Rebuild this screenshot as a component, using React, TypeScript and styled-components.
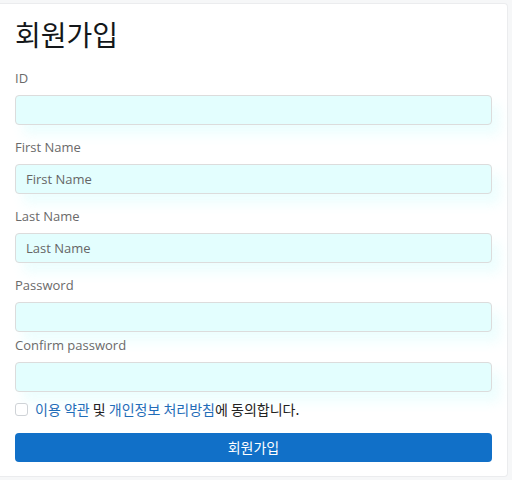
import React from "react";
import styled, { createGlobalStyle } from "styled-components";

const Global = createGlobalStyle`
  html, body { margin: 0; padding: 0; background: #f6f7f8; }
  body { font-family: "Open Sans", "Noto Sans CJK KR", sans-serif; }
  * { box-sizing: border-box; }
`;

const Page = styled.div`
  padding: 3px 4px 3px 0;
  width: 512px;
  height: 480px;
`;

const Card = styled.form`
  background: #fff;
  border: 1px solid #ebecee;
  border-left: none;
  border-radius: 0 4px 4px 0;
  height: 474px;
  padding: 12px 15px 14px 15px;
  display: flex;
  flex-direction: column;
`;

const Title = styled.h1`
  margin: 0 0 17px 0;
  font-family: "Noto Sans CJK KR", sans-serif;
  font-weight: 400;
  font-size: 28px;
  line-height: 36px;
  color: #14171a;
`;

const Group = styled.div<{ $tight?: boolean }>`
  display: flex;
  flex-direction: column;
  margin-bottom: ${(p) => (p.$tight ? "4px" : "13px")};
`;

const Label = styled.label`
  font-size: 13px;
  line-height: 18px;
  color: #6a6a6a;
  margin-bottom: 8px;
`;

const Input = styled.input`
  height: 30px;
  width: 100%;
  border: 1px solid #dcdcdc;
  border-radius: 4px;
  background: #e3fefe;
  padding: 0 10px;
  font-family: "Open Sans", sans-serif;
  font-size: 13px;
  color: #333;
  box-shadow: 8px 10px 12px rgba(225, 253, 253, 0.6);
  outline: none;
  &::placeholder { color: #666; }
`;

const CheckRow = styled.label`
  display: flex;
  align-items: center;
  gap: 7px;
  margin-top: 0;
  height: 28px;
  font-family: "Noto Sans CJK KR", sans-serif;
  font-size: 14px;
  color: #222;
`;

const Box = styled.span`
  width: 13px;
  height: 13px;
  border: 1px solid #cfd3d7;
  border-radius: 3px;
  background: #fff;
  flex: none;
`;

const Link = styled.span`
  color: #1f6db8;
`;

const Button = styled.button`
  margin-top: 10px;
  height: 31px;
  width: 100%;
  border: none;
  border-radius: 4px;
  background: #1170c8;
  color: #fff;
  font-family: "Noto Sans CJK KR", sans-serif;
  font-size: 14px;
`;

export default function App() {
  return (
    <>
      <Global />
      <Page>
        <Card onSubmit={(e) => e.preventDefault()}>
          <Title>회원가입</Title>
          <Group>
            <Label>ID</Label>
            <Input />
          </Group>
          <Group>
            <Label>First Name</Label>
            <Input placeholder="First Name" />
          </Group>
          <Group>
            <Label>Last Name</Label>
            <Input placeholder="Last Name" />
          </Group>
          <Group $tight>
            <Label>Password</Label>
            <Input type="password" />
          </Group>
          <Group $tight>
            <Label>Confirm password</Label>
            <Input type="password" />
          </Group>
          <CheckRow>
            <Box />
            <span>
              <Link>이용 약관</Link> 및 <Link>개인정보 처리방침</Link>에 동의합니다.
            </span>
          </CheckRow>
          <Button type="submit">회원가입</Button>
        </Card>
      </Page>
    </>
  );
}
